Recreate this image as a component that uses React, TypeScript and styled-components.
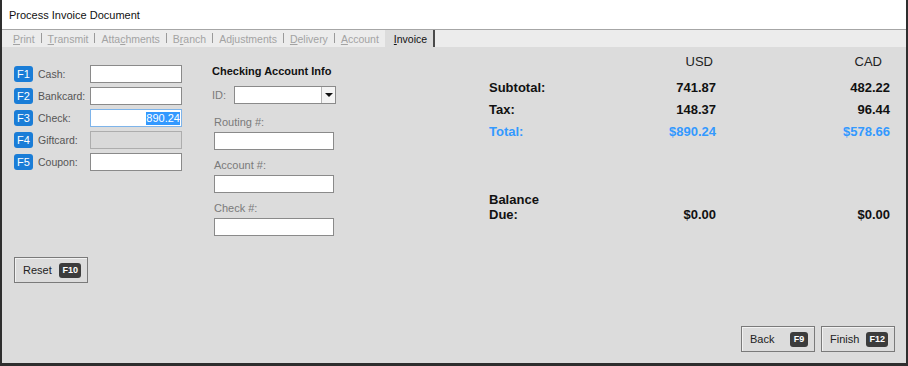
import React from 'react'
import styled, { createGlobalStyle } from 'styled-components';

const GlobalStyle = createGlobalStyle`
  html, body {
    margin: 0;
    padding: 0;
    background: #ffffff;
  }
  body {
    font-family: "Liberation Sans", Arial, sans-serif;
  }
  * { box-sizing: border-box; }
`;

const Window = styled.div`
  width: 908px;
  height: 366px;
  display: flex;
  flex-direction: column;
  background: #dcdcdc;
  border-left: 2px solid #2e2e2e;
  border-right: 2px solid #2e2e2e;
  border-bottom: 3px solid #2e2e2e;
  overflow: hidden;
`;

const TitleBar = styled.div`
  height: 30px;
  flex: none;
  display: flex;
  align-items: center;
  padding-left: 7px;
  background: #ffffff;
  border-bottom: 1px solid #a6a6a6;
  font-size: 11px;
  color: #111;
`;

const TabBar = styled.div`
  height: 17px;
  flex: none;
  display: flex;
  align-items: stretch;
  padding-left: 4px;
  background: #ececec;
`;

const Tab = styled.div<{ $active?: boolean }>`
  position: relative;
  display: flex;
  align-items: center;
  padding: 0 6px 0 ${p => p.$active ? 9 : 6}px;
  margin-left: ${p => p.$active ? 0 : 1}px;
  font-size: 10.5px;
  color: ${p => p.$active ? '#111' : '#a3a3a3'};
  background: ${p => p.$active ? '#dcdcdc' : 'transparent'};
  border-right: ${p => p.$active ? '2px solid #4a4a4a' : 'none'};

  &::after {
    content: '';
    display: ${p => p.$active ? 'none' : 'block'};
    position: absolute;
    right: -1px;
    top: 3px;
    height: 10px;
    width: 1px;
    background: #9a9a9a;
  }
`;

const Content = styled.div`
  flex: 1;
  display: flex;
  flex-direction: column;
  padding: 3px 11px 11px 12px;
`;

const TopRow = styled.div`
  display: flex;
  align-items: flex-start;
`;

const Payments = styled.div`
  width: 168px;
  display: flex;
  flex-direction: column;
  gap: 4px;
  padding-top: 15px;
`;

const PayRow = styled.div`
  display: flex;
  align-items: center;
  height: 18px;
`;

const FKey = styled.span`
  width: 19px;
  height: 16px;
  flex: none;
  display: flex;
  align-items: center;
  justify-content: center;
  border-radius: 3px;
  background: #1a7dd7;
  color: #fff;
  font-size: 11px;
`;

const PayLabel = styled.span`
  width: 57px;
  padding-left: 5px;
  font-size: 10.5px;
  color: #555;
`;

const Field = styled.div<{ $width?: number; $disabled?: boolean; $focused?: boolean }>`
  width: ${p => p.$width ?? 92}px;
  height: 18px;
  display: flex;
  align-items: center;
  justify-content: flex-end;
  padding: 0 1px;
  background: ${p => p.$disabled ? '#d9d9d9' : '#fff'};
  border: 1px solid ${p => p.$focused ? '#7eb4ea' : p.$disabled ? '#adadad' : '#8a8a8a'};
  font-size: 11px;
`;

const Selected = styled.span`
  background: #3399ff;
  color: #fff;
  line-height: 13px;
`;

const Checking = styled.div`
  width: 124px;
  margin-left: 30px;
  padding-top: 15px;
  display: flex;
  flex-direction: column;
`;

const SectionTitle = styled.div`
  font-size: 11px;
  font-weight: bold;
  color: #111;
  line-height: 13px;
  margin-bottom: 8px;
`;

const IdRow = styled.div`
  display: flex;
  align-items: center;
  justify-content: space-between;
  margin-bottom: 12px;
`;

const SoftLabel = styled.span`
  font-size: 11px;
  color: #7a7a7a;
  line-height: 13px;
`;

const Select = styled.div`
  width: 102px;
  height: 18px;
  display: flex;
  justify-content: flex-end;
  background: #fff;
  border: 1px solid #8a8a8a;
`;

const SelectArrow = styled.div`
  width: 14px;
  display: flex;
  align-items: center;
  justify-content: center;
  border-left: 1px solid #b5b5b5;
  background: #f4f4f4;

  &::before {
    content: '';
    border-left: 4px solid transparent;
    border-right: 4px solid transparent;
    border-top: 4px solid #111;
  }
`;

const FieldGroup = styled.div`
  display: flex;
  flex-direction: column;
  gap: 3px;
  padding-left: 2px;
  margin-bottom: 9px;
`;

const Summary = styled.div`
  margin-left: 153px;
  display: flex;
  flex-direction: column;
`;

const SumRow = styled.div<{ $tall?: boolean }>`
  display: grid;
  grid-template-columns: 130px 97px 174px;
  align-items: end;
  height: ${p => p.$tall ? 'auto' : '22px'};
  padding-bottom: ${p => p.$tall ? 0 : 3}px;
`;

const HeadRow = styled(SumRow)`
  margin-bottom: 4px;
`;

const HeadCell = styled.div<{ $pad: number }>`
  text-align: right;
  padding-right: ${p => p.$pad}px;
  font-size: 13px;
  color: #222;
`;

const SumLabel = styled.div<{ $accent?: boolean }>`
  font-size: 13px;
  font-weight: bold;
  line-height: 15px;
  color: ${p => p.$accent ? '#3399ff' : '#111'};
`;

const SumValue = styled(SumLabel)`
  text-align: right;
`;

const BalanceRow = styled(SumRow)`
  margin-top: 50px;
`;

const KeyButton = styled.div<{ $width?: number }>`
  width: ${p => p.$width ?? 74}px;
  height: 26px;
  display: flex;
  align-items: center;
  justify-content: space-between;
  padding: 0 6px 0 8px;
  background: #dcdcdc;
  border: 1px solid #7a7a7a;
  box-shadow: inset 1px 1px 0 #f2f2f2;
  font-size: 11px;
  color: #222;
`;

const DarkKey = styled.span`
  min-width: 18px;
  height: 15px;
  display: flex;
  align-items: center;
  justify-content: center;
  padding: 0 3px;
  border-radius: 3px;
  background: #3c3c3c;
  color: #fff;
  font-size: 9px;
  font-weight: bold;
`;

const ResetRow = styled.div`
  margin-top: 12px;
`;

const Footer = styled.div`
  margin-top: auto;
  display: flex;
  justify-content: flex-end;
  gap: 6px;
`;

const tabs: [string, string, string][] = [
  ['', 'P', 'rint'],
  ['', 'T', 'ransmit'],
  ['Atta', 'c', 'hments'],
  ['B', 'r', 'anch'],
  ['Ad', 'j', 'ustments'],
  ['', 'D', 'elivery'],
  ['', 'A', 'ccount'],
];

const payments = [
  { key: 'F1', label: 'Cash:' },
  { key: 'F2', label: 'Bankcard:' },
  { key: 'F3', label: 'Check:', value: '890.24', focused: true },
  { key: 'F4', label: 'Giftcard:', disabled: true },
  { key: 'F5', label: 'Coupon:' },
];

const totals = [
  { label: 'Subtotal:', usd: '741.87', cad: '482.22' },
  { label: 'Tax:', usd: '148.37', cad: '96.44' },
  { label: 'Total:', usd: '$890.24', cad: '$578.66', accent: true },
];

export default function App() {
  return (
    <>
      <GlobalStyle />
      <Window>
        <TitleBar>Process Invoice Document</TitleBar>
        <TabBar>
          {tabs.map(([a, u, b]) => (
            <Tab key={a + u + b}>{a}<u>{u}</u>{b}</Tab>
          ))}
          <Tab $active><u>I</u>nvoice</Tab>
        </TabBar>

        <Content>
          <TopRow>
            <Payments>
              {payments.map(p => (
                <PayRow key={p.key}>
                  <FKey>{p.key}</FKey>
                  <PayLabel>{p.label}</PayLabel>
                  <Field $disabled={p.disabled} $focused={p.focused}>
                    {p.value && <Selected>{p.value}</Selected>}
                  </Field>
                </PayRow>
              ))}
            </Payments>

            <Checking>
              <SectionTitle>Checking Account Info</SectionTitle>
              <IdRow>
                <SoftLabel>ID:</SoftLabel>
                <Select><SelectArrow /></Select>
              </IdRow>
              {['Routing #:', 'Account #:', 'Check #:'].map(l => (
                <FieldGroup key={l}>
                  <SoftLabel>{l}</SoftLabel>
                  <Field $width={120} />
                </FieldGroup>
              ))}
            </Checking>

            <Summary>
              <HeadRow>
                <div />
                <HeadCell $pad={3}>USD</HeadCell>
                <HeadCell $pad={8}>CAD</HeadCell>
              </HeadRow>
              {totals.map(t => (
                <SumRow key={t.label}>
                  <SumLabel $accent={t.accent}>{t.label}</SumLabel>
                  <SumValue $accent={t.accent}>{t.usd}</SumValue>
                  <SumValue $accent={t.accent}>{t.cad}</SumValue>
                </SumRow>
              ))}
              <BalanceRow $tall>
                <SumLabel>Balance<br />Due:</SumLabel>
                <SumValue>$0.00</SumValue>
                <SumValue>$0.00</SumValue>
              </BalanceRow>
            </Summary>
          </TopRow>

          <ResetRow>
            <KeyButton>Reset<DarkKey>F10</DarkKey></KeyButton>
          </ResetRow>

          <Footer>
            <KeyButton>Back<DarkKey>F9</DarkKey></KeyButton>
            <KeyButton>Finish<DarkKey>F12</DarkKey></KeyButton>
          </Footer>
        </Content>
      </Window>
    </>
  );
}
